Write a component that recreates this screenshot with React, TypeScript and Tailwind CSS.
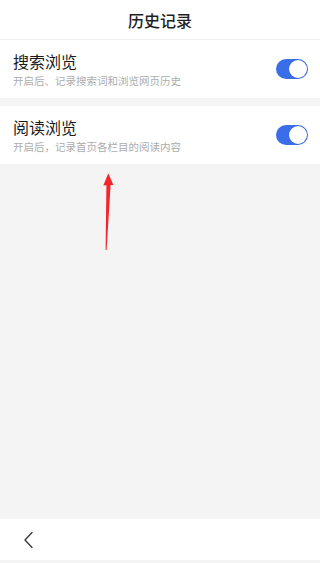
import React, { useState } from 'react';

const FONT = { fontFamily: '"PingFang SC", "Noto Sans CJK SC", "Noto Sans", sans-serif' };

type Row = { title: string; desc: string };

const ROWS: Row[] = [
    { title: '搜索浏览', desc: '开启后、记录搜索词和浏览网页历史' },
    { title: '阅读浏览', desc: '开启后，记录首页各栏目的阅读内容' },
];

const Toggle: React.FC<{ on: boolean; onChange: () => void }> = ({ on, onChange }) => (
    <button
        onClick={onChange}
        className={`w-[32px] h-[20px] rounded-full flex items-center px-[1px] ${on ? 'bg-[#3a6ee8] justify-end' : 'bg-[#e2e2e2] justify-start'}`}
    >
        <span className="w-[18px] h-[18px] rounded-full bg-white shadow-[0_0_1px_rgba(0,0,0,0.3)]" />
    </button>
);

const App: React.FC = () => {
    const [state, setState] = useState([true, true]);

    return (
        <div className="w-[320px] h-[563px] bg-[#f4f4f4] flex flex-col relative overflow-hidden" style={FONT}>
            <header className="h-[40px] bg-white border-b border-[#f0f0f0] flex items-center justify-center">
                <h1 className="text-[16px] font-medium text-[#1f1f1f] leading-none">历史记录</h1>
            </header>

            <div className="flex flex-col gap-[8px]">
                {ROWS.map((row, i) => (
                    <div key={row.title} className="h-[58px] bg-white flex items-center justify-between pl-[13px] pr-[12px]">
                        <div className="flex flex-col">
                            <p className="text-[16px] leading-[20px] text-[#1a1a1a]">{row.title}</p>
                            <p className="text-[10.5px] leading-[15px] mt-[2px] text-[#adadad]">{row.desc}</p>
                        </div>
                        <Toggle
                            on={state[i]}
                            onChange={() => setState(s => s.map((v, j) => (j === i ? !v : v)))}
                        />
                    </div>
                ))}
            </div>

            <div className="flex-1" />

            {/* bottom nav */}
            <div className="h-[41px] bg-white flex items-center pl-[22px] mb-[3px]">
                <svg width="14" height="18" viewBox="0 0 14 18" fill="none">
                    <path d="M10 1.5 L3 9 L10 16.5" stroke="#333" strokeWidth="1.3" strokeLinecap="round" strokeLinejoin="round" />
                </svg>
            </div>

            {/* annotation arrow */}
            <svg className="absolute left-[100px] top-[170px]" width="20" height="85" viewBox="0 0 20 85">
                <polygon points="8.3,3.3 3.3,15.6 6.4,15.3 5.6,80 6.6,80 10.6,15 13.4,15" fill="#f2262c" />
            </svg>
        </div>
    );
};

export default App;
